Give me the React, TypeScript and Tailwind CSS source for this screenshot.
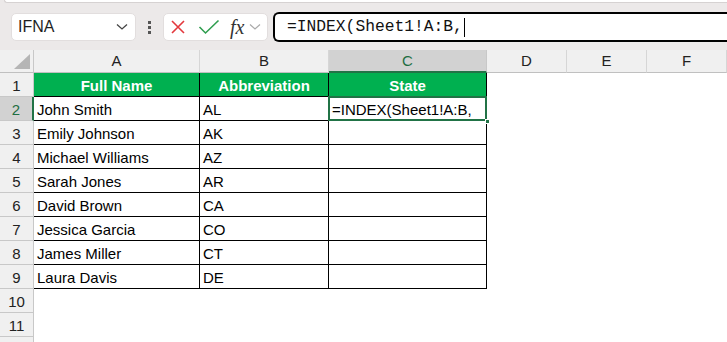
import React from "react";

const people = [
	["John Smith", "AL"],
	["Emily Johnson", "AK"],
	["Michael Williams", "AZ"],
	["Sarah Jones", "AR"],
	["David Brown", "CA"],
	["Jessica Garcia", "CO"],
	["James Miller", "CT"],
	["Laura Davis", "DE"],
];

const colHeads = [
	{ label: "A", w: "w-[166px]" },
	{ label: "B", w: "w-[129px]" },
	{ label: "C", w: "w-[158px]", active: true },
	{ label: "D", w: "w-[80px]" },
	{ label: "E", w: "w-[80px]" },
	{ label: "F", w: "w-[80px]" },
];

const RowHead = ({ n, active }: { n?: number; active?: boolean }) => (
	<div
		className={
			active
				? "w-[34px] shrink-0 h-full flex items-center justify-center pt-[3px] bg-[#d2d2d2] text-[#1e6e42] border-r-2 border-r-[#217346] border-b border-b-[#c8c8c8]"
				: "w-[34px] shrink-0 h-full flex items-center justify-center pt-[3px] bg-[#f0f0f0] text-[#222] border-r border-r-[#c8c8c8] border-b border-b-[#c8c8c8]"
		}
	>
		{n}
	</div>
);

const FormulaBar = () => (
	<div className="relative h-[50px] bg-[#ece9e9] shrink-0">
		<div className="ml-[4px] h-[3px] bg-white border-b border-l border-[#d6d2d2] rounded-bl-[4px]" />
		<div className="flex items-start pt-[10px]">
			<div className="ml-[11px] w-[125px] h-[28px] bg-white rounded-[5px] border border-[#e2dede] flex items-center justify-between pl-[6px] pr-[7px]">
				<span className="text-[16px] text-[#1f1f1f]">IFNA</span>
				<svg width="12" height="8" viewBox="0 0 12 8">
					<path d="M1 1.5 L6 6 L11 1.5" stroke="#444" strokeWidth="1.3" fill="none" />
				</svg>
			</div>
			<div className="w-[27px] h-[28px] flex flex-col items-center justify-center gap-[2px]">
				<span className="w-[3px] h-[3px] bg-[#555]" />
				<span className="w-[3px] h-[3px] bg-[#555]" />
				<span className="w-[3px] h-[3px] bg-[#555]" />
			</div>
			<div className="w-[105px] h-[28px] bg-white rounded-[5px] border border-[#e2dede] flex items-center pl-[6px]">
				<svg width="16" height="16" viewBox="0 0 16 16">
					<path d="M2 2 L14 14 M14 2 L2 14" stroke="#e3383d" strokeWidth="1.6" fill="none" />
				</svg>
				<svg className="ml-[12px]" width="22" height="16" viewBox="0 0 22 16">
					<path d="M1.5 8 L7.5 14 L20.5 1.5" stroke="#2f9e4f" strokeWidth="1.6" fill="none" />
				</svg>
				<span className="ml-[10px] text-[20px] leading-none italic font-['Liberation_Serif',serif] text-[#333]">
					fx
				</span>
				<svg className="ml-[5px]" width="12" height="8" viewBox="0 0 12 8">
					<path d="M1 1.5 L6 6 L11 1.5" stroke="#aaa" strokeWidth="1.2" fill="none" />
				</svg>
			</div>
			<div className="ml-[5px] -mt-[1px] flex-1 h-[30px] bg-white border-2 border-black rounded-[6px] border-r-0 rounded-r-none flex items-center pl-[12px]">
				<span className="font-['Liberation_Mono',monospace] text-[16.3px] text-[#111]">
					=INDEX(Sheet1!A:B,
				</span>
				<span className="ml-[1px] w-[1px] h-[19px] bg-black" />
			</div>
		</div>
	</div>
);

export default function App() {
	return (
		<div className="w-[727px] h-[342px] overflow-hidden bg-white font-['Liberation_Sans',Arial,sans-serif] text-[15px] flex flex-col">
			<FormulaBar />
			{/* column headers */}
			<div className="flex h-[23px] shrink-0">
				<div className="relative w-[34px] shrink-0 h-full bg-[#f0f0f0] border-r border-r-[#c8c8c8] border-b border-b-[#c0c0c0]">
					<svg className="absolute right-[3px] bottom-[3px]" width="16" height="15" viewBox="0 0 16 15">
						<path d="M16 0 L16 15 L0 15 Z" fill="#b5b5b5" />
					</svg>
				</div>
				{colHeads.map((c) => (
					<div
						key={c.label}
						className={
							c.active
								? `${c.w} shrink-0 h-full flex items-center justify-center pt-[1px] bg-[#d2d2d2] text-[#1e6e42] border-r border-r-[#c8c8c8] border-b-2 border-b-[#217346]`
								: `${c.w} shrink-0 h-full flex items-center justify-center pt-[1px] bg-[#f0f0f0] text-[#222] border-r border-r-[#d6d6d6] border-b border-b-[#c0c0c0]`
						}
					>
						{c.label}
					</div>
				))}
				<div className="flex-1 h-full bg-[#f0f0f0] border-b border-b-[#c0c0c0]" />
			</div>
			{/* row 1 */}
			<div className="flex h-[24px] shrink-0">
				<RowHead n={1} />
				<div className="w-[166px] shrink-0 h-full pt-[3px] bg-[#00b050] border-r border-b border-black flex items-center justify-center font-bold text-white">
					Full Name
				</div>
				<div className="w-[129px] shrink-0 h-full pt-[3px] bg-[#00b050] border-r border-b border-black flex items-center justify-center font-bold text-white">
					Abbreviation
				</div>
				<div className="w-[158px] shrink-0 h-full pt-[3px] bg-[#00b050] border-r border-black flex items-center justify-center font-bold text-white">
					State
				</div>
			</div>
			{people.map(([name, abbr], i) => (
				<div key={name} className="flex h-[24px] shrink-0">
					<RowHead n={i + 2} active={i === 0} />
					<div className="w-[166px] shrink-0 h-full pt-[3px] border-r border-b border-black flex items-center pl-[3px] text-black">
						{name}
					</div>
					<div className="w-[129px] shrink-0 h-full pt-[3px] border-r border-b border-black flex items-center pl-[3px] text-black">
						{abbr}
					</div>
					{i === 0 ? (
						<div className="relative w-[158px] shrink-0 h-full pt-[3px] flex items-center text-black">
							<div className="absolute -left-[1px] -top-[1px] w-[159px] h-[25px] border-2 border-[#217346]" />
							<span className="pl-[3px] whitespace-nowrap">=INDEX(Sheet1!A:B,</span>
							<span className="absolute -right-[3px] -bottom-[3px] w-[5px] h-[5px] bg-[#217346] border border-white" />
						</div>
					) : (
						<div className="w-[158px] shrink-0 h-full border-r border-b border-black" />
					)}
				</div>
			))}
			<div className="flex h-[24px] shrink-0">
				<RowHead n={10} />
			</div>
			<div className="flex h-[24px] shrink-0">
				<RowHead n={11} />
			</div>
			<div className="flex h-[24px] shrink-0">
				<RowHead />
			</div>
		</div>
	);
}
